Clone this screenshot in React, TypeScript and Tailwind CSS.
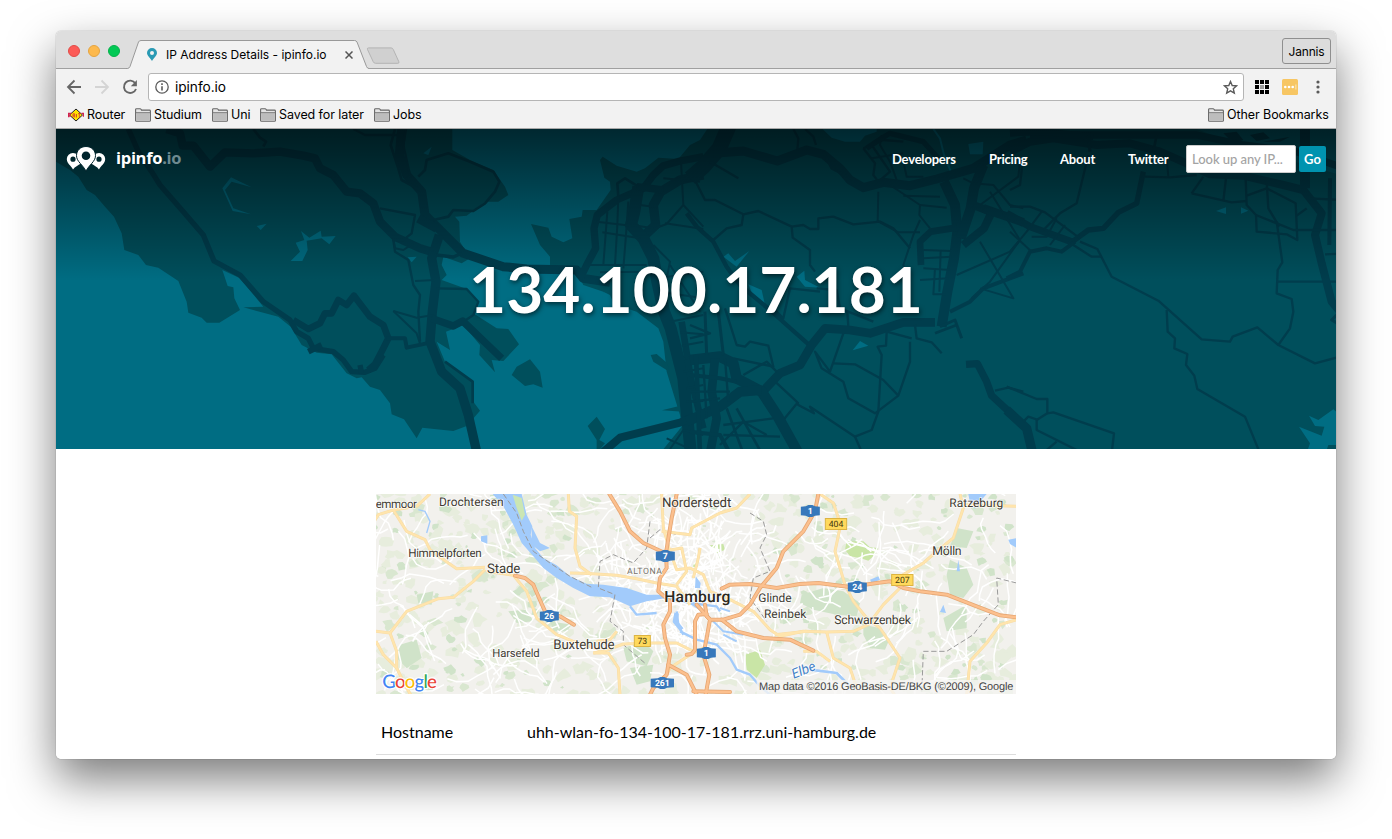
import React from "react";

const LAND = "#004f5c";
const WATER = "#006d83";
const ROAD = "#003d4d";

type Stroke = [string, number];

/* Banner artwork is split in four 960-unit wide sheets laid side by side. */
const sheetA: Stroke[] = [
  ["235,12 265,80 305,140 330,180 400,260 460,330 492,408 570,450 640,530 720,585 740,620 775,640 790,670 850,680 880,705 905,740 945,742 975,730 1000,690", 16],
  ["350,12 390,25 398,62 430,62 480,125 525,82 610,85 690,80 760,92 795,100 810,130 850,150 890,200 930,205 970,235 990,290 1035,335 1110,370 1160,385", 25],
  ["730,585 775,612 810,595 825,565 845,565 865,525 890,540 912,512 960,575 1000,600 1015,640 1000,670 975,718 955,735", 20],
  ["775,680 815,660", 18],
  ["930,720 935,745", 16],
  ["610,12 630,38 648,50 640,65", 8],
  ["910,12 945,30 1050,30", 7],
];
const sheetB: Stroke[] = [
  ["95,12 88,90 110,150 155,200 165,270 215,320 280,385 400,425 470,432 620,435 640,460 720,472", 27],
  ["75,12 62,60 85,130 95,165 150,195", 8],
  ["108,12 100,60 120,150", 7],
  ["208,330 185,400 198,470 187,560 180,650 215,740 270,790 295,870 320,980", 28],
  ["145,155 165,135 170,105 235,85 300,110 370,140 388,170 375,200 345,235 310,258 250,255 235,275 190,285", 8],
  ["145,280 200,310", 26],
  ["30,250 135,270 125,325 100,345 70,345 75,380 115,405 130,480 150,510 145,560 150,650", 7],
  ["70,340 75,370 100,375 130,355", 6],
  ["135,468 195,465", 6],
  ["70,558 140,578 190,570", 6],
  ["70,558 140,625 150,655", 6],
  ["200,490 290,492 325,530 310,570 280,590", 7],
  ["185,580 250,603 278,588 395,700", 22],
  ["50,640 105,640 110,668 170,655", 12],
  ["225,710 308,770 308,835", 8],
  ["200,390 250,396 275,385", 10],
  ["1000,95 930,108 880,122 850,150 820,190 740,225 682,270 672,310 677,370 650,420 630,462", 22],
  ["1000,150 930,165 872,200 850,240 857,300 825,330", 28],
  ["805,185 793,260 783,300 820,340 850,400 862,470 882,560 902,610 940,760 952,880 962,980", 36],
  ["695,985 750,938 930,893 960,880", 24],
  ["935,590 962,760 1000,910", 20],
  ["800,185 880,195", 22],
  ["745,215 742,175 765,160 805,185", 8],
  ["745,215 742,300 735,420", 6],
  ["712,260 700,420", 6],
  ["775,230 768,330 760,430", 6],
  ["680,290 790,303", 6],
  ["697,322 810,340", 6],
  ["640,420 830,420", 6],
  ["690,442 830,440", 6],
  ["810,240 850,245", 6],
  ["785,300 850,310", 6],
  ["880,160 990,170", 6],
  ["933,110 940,240 1000,305", 6],
  ["940,240 890,297 850,312", 6],
  ["885,295 1000,312", 6],
  ["850,360 900,410 890,460", 6],
  ["860,460 1000,440", 6],
  ["870,500 1000,520", 6],
  ["900,420 990,560", 6],
  ["900,590 1000,570", 6],
  ["930,622 1000,628", 6],
  ["935,662 1000,650", 6],
  ["945,700 1000,695", 6],
  ["940,740 1000,730", 6],
  ["950,790 1000,780", 6],
  ["950,830 1000,828", 6],
  ["900,972 940,915 1000,930", 6],
  ["890,940 960,972", 6],
];
const sheetC: Stroke[] = [
  ["118,0 88,70 40,125 0,160", 46],
  ["70,85 160,78 262,108 350,75 400,88 450,130 480,165 520,188 580,172 660,182 740,162 850,130 960,60 1010,45", 27],
  ["400,80 425,130 500,170", 8],
  ["18,172 45,225 75,225 160,268 205,258 305,305 308,338 360,375 360,420 375,440", 7],
  ["160,268 155,300 110,310 70,345", 7],
  ["305,305 340,300 360,312 385,312 385,280 430,275 490,298 570,290 610,310 660,370", 7],
  ["60,110 145,160", 7],
  ["310,12 325,40 322,75", 7],
  ["345,12 370,35 378,60", 7],
  ["-10,265 20,305 70,350 110,425 150,480 240,555 290,600 360,662", 13],
  ["215,803 270,745 330,720 365,660 405,610 480,615 540,625 640,592 735,592", 26],
  ["755,605 772,500 792,400 802,320 795,240 762,170", 30],
  ["880,120 852,190 842,250 812,340", 30],
  ["850,240 905,262 882,310 820,360", 24],
  ["693,420 690,350 722,320 800,308", 20],
  ["880,250 1000,292", 26],
  ["780,560 840,530 880,490 1000,445", 12],
  ["565,200 563,288 625,322 690,322", 6],
  ["600,180 690,240 688,270 720,310", 6],
  ["690,240 770,248", 6],
  ["640,212 750,215", 6],
  ["690,285 670,330 640,420 660,470", 6],
  ["700,375 785,378", 6],
  ["700,400 785,395", 6],
  ["700,430 780,435", 6],
  ["690,465 775,460", 6],
  ["735,430 730,508 768,508", 6],
  ["752,375 748,500", 6],
  ["520,70 555,115 550,150 565,170 600,140 545,60", 7],
  ["520,70 580,45 640,50", 7],
  ["575,30 570,60 600,110 620,165", 6],
  ["545,100 640,85", 6],
  ["530,70 575,40 600,25 700,50 745,100", 16],
  ["640,110 650,155 700,155", 6],
  ["990,345 900,470 845,520", 6],
  ["870,350 970,520 870,490", 6],
  ["900,200 990,345 960,380 800,450", 6],
  ["820,160 850,175 910,180 960,240 1000,250", 6],
  ["870,240 985,155 990,110", 6],
  ["750,605 795,585 815,640", 9],
  ["735,625 800,600", 8],
  ["675,600 680,640 725,652 755,685", 7],
  ["665,640 590,620 588,662 563,665 575,690 565,860 545,915 495,935 360,845 372,865 325,840 320,830 245,760", 7],
  ["460,625 420,740 375,680 395,730 460,770 475,820 555,865 625,812 660,710 660,650", 7],
  ["430,715 495,718 580,765 625,812", 7],
  ["495,935 515,980", 7],
  ["325,830 280,885", 7],
  ["472,560 475,605", 7],
  ["380,490 440,495 450,550 550,590", 7],
  ["240,540 280,580 300,490 390,500", 7],
  ["105,550 140,660 165,665 180,650 235,662 250,725 130,700", 7],
  ["160,750 230,710 260,740", 7],
  ["0,705 90,695 130,715 140,760 215,800 262,872 325,985", 32],
  ["-10,890 90,845 150,800 215,795", 30],
  ["75,700 65,800 80,880 60,985", 26],
  ["0,750 90,760 140,770", 12],
  ["18,690 30,985", 14],
  ["45,560 50,690", 9],
  ["85,560 100,690", 9],
  ["0,600 60,625 0,640", 7],
  ["0,800 120,800", 7],
  ["0,830 90,820", 7],
  ["110,850 160,985", 8],
  ["140,850 215,985", 8],
  ["100,900 250,880", 7],
  ["100,930 270,935", 7],
  ["90,960 160,890 230,930", 7],
  ["0,920 90,930 120,985", 12],
  ["40,720 50,880", 7],
  ["105,700 115,830", 7],
  ["828,718 862,716 890,770 905,812 1000,900", 22],
  ["915,797 955,788 1000,800", 7],
];
const sheetD: Stroke[] = [
  ["-10,265 60,305 190,352", 22],
  ["180,355 235,315 280,310 325,262 380,235 400,140", 16],
  ["-10,460 30,440 60,380 110,370 155,380 195,350", 12],
  ["0,245 60,245 105,262 210,340", 7],
  ["0,380 50,320 95,260", 6],
  ["65,335 110,335 140,280", 6],
  ["100,315 150,265 200,235 235,90", 7],
  ["0,320 65,380", 6],
  ["120,360 165,300", 6],
  ["0,195 30,180 38,110", 7],
  ["210,350 262,372 305,455 445,527 575,643 660,650 668,635 742,607 805,660 915,715 990,695", 7],
  ["190,360 245,395 275,395", 7],
  ["470,555 473,620 495,640 493,670 532,687 528,720 553,752 562,792 705,875 750,985", 7],
  ["800,290 817,412 803,435 800,505 845,522 850,560 840,610 805,660", 7],
  ["800,470 990,470", 7],
  ["0,80 60,50 130,40 260,60 360,55 450,80 530,115 600,148 700,152 820,180 880,195 935,265 915,330 935,415 965,530 990,560", 24],
  ["60,30 450,30 560,30 700,60 860,80 990,125", 22],
  ["885,0 885,190", 30],
  ["0,25 100,20 250,35", 20],
  ["235,30 240,80", 10],
  ["440,30 430,80", 8],
  ["545,205 580,155", 7],
  ["545,205 665,232 710,228", 7],
  ["648,160 640,228", 7],
  ["707,160 710,240 738,270 740,320 830,328 862,345 857,235 770,190 710,212", 7],
  ["770,170 775,250 808,305", 7],
  ["738,270 850,315 990,315", 7],
  ["860,272 890,250", 7],
  ["960,160 958,360", 12],
  ["900,220 990,225", 7],
  ["945,388 990,386", 7],
  ["405,155 480,157 560,150", 7],
  ["470,100 475,155", 6],
  ["990,560 965,585 990,600", 9],
  ["-10,855 50,910 68,985", 28],
  ["-10,785 80,822 112,822 112,865 80,885 80,915 200,975", 7],
  ["112,865 130,862 312,925 305,985", 7],
  ["40,890 55,875 85,885", 7],
  ["110,975 140,950", 7],
];

function Roads({ list, x }: { list: Stroke[]; x: number }) {
  return (
    <g transform={`translate(${x} 0)`} fill="none" stroke={ROAD} strokeLinejoin="round">
      {list.map(([p, w], i) => (
        <polyline key={i} points={p} strokeWidth={w} />
      ))}
    </g>
  );
}

function BannerMap() {
  return (
    <svg className="absolute inset-0 size-full" viewBox="18 12 3840 960" preserveAspectRatio="none">
      <defs>
        <linearGradient id="shade" x1="0" y1="0" x2="0" y2="1">
          <stop offset="0" stopColor="#000" stopOpacity=".64" />
          <stop offset="1" stopColor="#000" stopOpacity="0" />
        </linearGradient>
      </defs>
      <rect x="0" y="0" width="3900" height="1000" fill={WATER} />
      <g fill={LAND}>
        <path d="M0 100L60 135 85 155 110 195 135 210 165 245 192 275 215 325 223 375 265 390 288 420 325 428 385 468 410 530 415 563 455 578 470 593 508 593 570 555 553 520 550 487 533 483 517 435 570 460 640 545 580 547 685 575 722 605 755 660 800 683 845 688 890 745 920 760 935 757 960 785 990 795 1020 835 1025 868 1062 883 1100 940 1117 908 1210 918 1250 903 1290 857 1270 830 1270 770 1185 710 1160 650 1200 675 1188 620 1240 600 1290 660 1288 690 1335 742 1325 705 1360 708 1407 658 1375 612 1340 610 1270 565 1285 530 1250 492 1175 465 1190 450 1175 420 1180 395 1235 415 1260 400 1230 350 1228 290 1215 275 1250 272 1305 230 1345 230 1375 210 1365 185 1330 135 1260 105 1207 75V0H0z" />
        <path d="M1980 0L1950 45 1920 60 1885 102 1825 98 1785 130 1760 140 1700 122 1658 95 1650 105 1663 158 1680 170 1682 195 1640 255 1598 255 1595 275 1558 282 1567 340 1540 352 1505 335 1495 308 1443 297 1470 360 1500 395 1500 425 1580 440 1600 480 1660 500 1670 530 1700 540 1760 560 1825 610 1840 650 1850 740 1890 870 1895 905 1830 985H3900V0z" />
        <path d="M1440 703L1470 740 1478 788 1450 778 1425 783 1385 750 1400 725z" />
        <path d="M1640 875L1665 912 1648 945 1665 955 1640 985V945L1613 903z" />
        <path d="M1802 690L1820 687 1852 715 1858 740 1810 710z" />
        <path d="M1836 856L1900 840V860z" />
      </g>
      <g fill={WATER}>
        <path d="M543 157L605 187 545 170 525 195 550 250 603 268 548 258 517 190z" />
        <path d="M620 303L650 296 632 315z" />
        <path d="M753 318L778 338 812 317 815 335 857 333 838 358 815 340 770 347 773 375 757 408H722L750 380 737 353 763 345z" />
        <path d="M1120 85L1145 65 1135 90z" />
        <path d="M1073 397L1100 395 1085 412z" />
        <path d="M1580 480L1590 490 1585 510zM1660 500L1680 510 1690 535 1670 550 1655 530z" />
        <path d="M2020 395L2035 385 2055 408 2098 378 2060 425z" />
        <path d="M2095 478L2135 495 2145 540 2110 515z" />
        <path d="M2240 455L2263 437 2265 465 2310 488 2265 485z" />
        <path d="M2408 676L2430 648 2455 662z" />
        <path d="M2755 57L2800 50 2798 88 2760 88z" />
        <path d="M2305 0L2345 38 2385 50 2430 50 2445 32 2480 20 2480 0z" />
        <path d="M3498 258L3528 247V267zM3573 247L3595 257 3573 266z" />
        <path d="M3747 905L3815 932 3823 905 3795 903 3777 872 3805 885 3850 853 3870 870V960H3835L3830 975H3773L3780 955z" />
        <path d="M3440 12H3870V150L3700 100 3560 60z" opacity=".4" />
      </g>
      <path d="M2650 12L2670 40 2682 90 2705 145" fill="none" stroke={WATER} strokeWidth="6" />
      <g fill={ROAD}>
        <path d="M3520 25L3560 20 3580 45 3550 55zM3600 30L3640 22 3660 40 3620 48zM3640 50L3720 35 3690 50z" />
      </g>
      <Roads list={sheetA} x={0} />
      <Roads list={sheetB} x={960} />
      <Roads list={sheetC} x={1920} />
      <Roads list={sheetD} x={2880} />
      <rect x="0" y="12" width="3900" height="456" fill="url(#shade)" />
    </svg>
  );
}

/* Deterministic countryside texture for the city map. */
function makeRandom(seed: number) {
  let s = seed;
  return () => {
    s = (s * 16807) % 2147483647;
    return s / 2147483647;
  };
}

function blob(r: () => number, x: number, y: number, size: number) {
  const pts: string[] = [];
  const n = 7 + Math.floor(r() * 4);
  for (let i = 0; i < n; i++) {
    const a = (i / n) * Math.PI * 2;
    const d = size * (0.45 + r() * 0.7);
    pts.push(`${(x + Math.cos(a) * d).toFixed(0)},${(y + Math.sin(a) * d * 0.8).toFixed(0)}`);
  }
  return pts.join(" ");
}

function wander(r: () => number, x: number, y: number, steps: number, len: number) {
  let a = r() * Math.PI * 2;
  let d = `M${x.toFixed(0)} ${y.toFixed(0)}`;
  for (let i = 0; i < steps; i++) {
    a += (r() - 0.5) * 1.1;
    x += Math.cos(a) * len * (0.6 + r());
    y += Math.sin(a) * len * (0.6 + r());
    d += `L${x.toFixed(0)} ${y.toFixed(0)}`;
  }
  return d;
}

const rnd = makeRandom(4127);
const fields = Array.from({ length: 720 }, () => {
  const x = rnd() * 1940;
  const y = rnd() * 630;
  const city = Math.hypot((x - 960) / 1.3, y - 270) < 220;
  return { p: blob(rnd, x, y, city ? 6 : 9 + rnd() * 19), c: rnd() < 0.82 ? "#e7eddd" : "#d9e7d0" };
});
const woods = Array.from({ length: 120 }, () => {
  const x = rnd() < 0.35 ? rnd() * 600 : 1200 + rnd() * 740;
  return blob(rnd, x, rnd() * 630, 6 + rnd() * 14);
});
const lanes = Array.from({ length: 230 }, () => wander(rnd, rnd() * 1940, rnd() * 630, 6, 24));
const cityLanes = Array.from({ length: 170 }, () =>
  wander(rnd, 960 + (rnd() + rnd() - 1) * 250, 270 + (rnd() + rnd() - 1) * 270, 5, 18),
);

const yellowRoads = [
  "0,120 25,80 70,66 140,55 180,18",
  "70,66 110,130 165,155 180,185 235,225 260,242 345,238",
  "345,245 310,280 250,328 205,332 110,370 60,435 18,430",
  "60,435 80,490 80,540 110,600 125,625",
  "18,460 40,500 80,540",
  "350,250 430,262 470,310 500,390 560,440 610,460 690,485",
  "595,18 598,70 620,85 615,180 630,235 665,260",
  "600,255 640,256 740,262 800,272 860,285 920,295 960,350",
  "670,495 700,490 760,468 850,465 920,465 970,490",
  "670,495 715,495 745,540 750,620",
  "740,430 720,455 680,460",
  "875,18 880,120 900,190 920,245 960,240 1000,260 1020,310 1080,335 1150,370 1200,425 1230,445 1300,430 1370,432 1450,430 1495,410 1540,350 1590,300",
  "880,190 935,180 950,250 920,290",
  "875,130 960,140 965,120 1050,75 1100,60 1140,18",
  "1350,18 1390,45 1412,110 1395,190 1425,290 1450,340 1490,390 1530,420 1590,510 1560,600 1580,630",
  "1590,300 1600,260 1660,225 1700,190 1750,150 1780,60 1770,18",
  "1780,50 1940,55",
  "1370,432 1390,510 1440,540 1460,600",
  "1215,440 1310,430",
  "1940,395 1890,410 1850,465 1800,520 1790,620",
  "880,580 900,540 960,500 1000,480",
  "970,270 985,210 990,180",
  "1300,490 1340,490 1380,520",
];
const motorways = [
  "718,18 750,70 780,130 820,165 885,195",
  "920,18 905,90 888,195 890,240 870,270 865,310 900,340 900,370 880,410 885,450 900,500 890,560 850,600 835,630",
  "895,530 950,560 980,620",
  "1055,302 1080,290 1140,288 1220,300 1290,288 1345,285 1440,297 1520,285 1560,280 1600,300 1650,310 1730,320 1820,355 1890,382 1940,388",
  "1345,18 1335,70 1300,130 1240,190 1220,240 1170,300 1140,350 1110,380 1060,395 1020,395 980,350",
  "1055,395 1100,430 1180,450 1260,455 1330,488",
  "1005,350 1010,385 1020,395 1010,450 1000,500 1018,560 1005,630",
  "1010,378 985,380 975,400 975,485 965,498 950,500",
  "970,610 1080,612",
  "435,263 465,270 490,290 505,325 525,370 570,385 612,410",
];

function Shield({ x, y, w, t, blue }: { x: number; y: number; w: number; t: string; blue?: boolean }) {
  const h = 33;
  return (
    <g transform={`translate(${x} ${y})`}>
      {blue ? (
        <path d={`M${-w / 2} -13L-14 -14 -6 -18H6L14 -14 ${w / 2} -13V13L14 14 6 18H-6L-14 14 ${-w / 2} 13z`} fill="#3778bb" />
      ) : (
        <rect x={-w / 2} y={-h / 2} width={w} height={h} fill="#ffd95c" stroke="#dcb442" strokeWidth="3" />
      )}
      <text y="9" textAnchor="middle" fontSize="26" fontWeight={blue ? 700 : 400} fill={blue ? "#fff" : "#40370f"}>
        {t}
      </text>
    </g>
  );
}

const places: [string, number, number, number, number][] = [
  ["emmoor", 17, 60, 35, 124],
  ["Drochtersen", 207, 54, 36, 194],
  ["Himmelpforten", 115, 207, 35, 220],
  ["Stade", 351, 255, 40, 100],
  ["Buxtehude", 550, 483, 40, 184],
  ["Harsefeld", 367, 507, 34, 142],
  ["Norderstedt", 876, 57, 40, 208],
  ["Glinde", 1165, 342, 36, 100],
  ["Reinbek", 1182, 390, 36, 127],
  ["Schwarzenbek", 1393, 408, 37, 230],
  ["Mölln", 1687, 201, 37, 88],
  ["Ratzeburg", 1738, 57, 36, 162],
];

function CityMap() {
  return (
    <svg className="block h-[200px] w-[640px]" viewBox="18 18 1920 600" fontFamily="Roboto, sans-serif" textRendering="geometricPrecision">
      <rect x="0" y="0" width="1960" height="640" fill="#f2f1ed" />
      {fields.map((f, i) => (
        <polygon key={i} points={f.p} fill={f.c} />
      ))}
      <g fill="#d0e3c9">
        {woods.map((p, i) => (
          <polygon key={i} points={p} />
        ))}
        <path d="M1295 320L1360 300 1420 310 1470 345 1460 385 1400 380 1330 365 1290 345zM1480 410L1530 420 1560 450 1545 485 1500 480 1480 440z" />
        <path d="M1740 215L1790 240 1810 290 1780 330 1740 320 1730 260zM1720 390L1790 350 1790 420 1730 430zM1760 120L1810 130 1790 180 1740 175z" />
        <path d="M415 370L470 365 490 400 440 405zM540 400L605 410 590 430 550 430zM90 470L140 455 155 510 110 540 80 510zM140 320L190 310 185 350 145 345z" />
        <path d="M760 480L820 460 850 490 830 535 770 520zM780 540L850 530 840 580 800 590z" />
      </g>
      <g fill="#c9e5a6">
        <path d="M1430 160L1480 160 1500 178 1525 180 1515 200 1495 218 1470 210 1440 205 1425 185z" />
        <path d="M1125 500L1170 485 1185 530 1160 570 1130 545zM1020 172L1060 168 1065 185 1035 198zM970 225h14v15h-14z" />
      </g>
      <g fill="none" stroke="#fff" strokeWidth="4.500" strokeLinejoin="round">
        {lanes.map((d, i) => (
          <path key={i} d={d} />
        ))}
      </g>
      <g fill="none" stroke="#fff" strokeWidth="5">
        {cityLanes.map((d, i) => (
          <path key={i} d={d} />
        ))}
      </g>
      <g fill="#a2cbfb">
        <path d="M368 18L400 55 430 110 455 165 490 205 520 240 560 270 610 300 660 325 720 328 780 355 830 340 890 330 900 320 830 320 770 300 700 290 650 287 600 265 560 232 520 210 495 180 482 140 487 115 470 80 455 18z" />
        <path d="M485 115L510 165 540 180 510 190 485 170zM333 145L352 142 352 167 333 160zM977 265L992 285 990 300 975 300z" />
        <path d="M1500 275L1525 265 1530 275 1505 285zM1765 215L1770 250 1760 250zM1720 350L1728 375 1710 372z" />
        <path d="M1795 18L1850 18 1835 35 1815 62 1800 45zM1915 155L1940 150V180L1920 168z" />
      </g>
      <path d="M428 20L455 30 465 80 455 98 440 60z" fill="#cbe6b3" />
      <g fill="none" stroke="#a2cbfb" strokeWidth="8" strokeLinejoin="round">
        <path d="M780 355L800 380 860 375M920 370L925 410 940 440M900 330L960 345 1040 355 1050 370M930 430L980 455 1040 470 1080 510 1100 545 1140 560 1170 595 1200 620" strokeWidth="7" />
        <path d="M920 375L915 400 935 425" strokeWidth="14" />
        <path d="M960 345L1000 370 1060 430 1120 440M1050 360L1080 370M1060 440L1100 460" strokeWidth="6" />
        <path d="M1320 545L1400 555 1440 595" />
        <path d="M145 65L165 70 180 100 170 135" strokeWidth="4" />
      </g>
      <g fill="none" stroke="#9a9a9a" strokeWidth="3" strokeDasharray="16 8">
        <path d="M400 18L440 75 460 130 490 190 540 225 600 265 665 298" />
        <path d="M840 100L830 180 790 225 730 200 690 220 685 300 735 320 720 400 760 430 760 470 830 530" />
        <path d="M840 150L870 125 920 140M1140 75L1180 100 1190 140 1170 180 1200 250 1150 270 1140 330 1190 400" />
        <path d="M1940 285L1880 270 1885 350 1840 400 1810 440 1730 490 1660 490 1655 620" />
      </g>
      <g fill="none" strokeLinejoin="round">
        {yellowRoads.map((p, i) => (
          <polyline key={i} points={p} stroke="#f8dca6" strokeWidth="9" />
        ))}
        {yellowRoads.map((p, i) => (
          <polyline key={i} points={p} stroke="#ffe5ad" strokeWidth="6" />
        ))}
        {motorways.map((p, i) => (
          <polyline key={i} points={p} stroke="#e6a774" strokeWidth="12" strokeLinecap="round" />
        ))}
        {motorways.map((p, i) => (
          <polyline key={i} points={p} stroke="#fcc08e" strokeWidth="7" strokeLinecap="round" />
        ))}
      </g>
      <Shield x={538} y={384} w={57} t="26" blue />
      <Shield x={886} y={204} w={57} t="7" blue />
      <Shield x={1009} y={495} w={57} t="1" blue />
      <Shield x={877} y={585} w={70} t="261" blue />
      <Shield x={1321} y={69} w={57} t="1" blue />
      <Shield x={1462} y={297} w={57} t="24" blue />
      <Shield x={817} y={459} w={48} t="73" />
      <Shield x={1398} y={108} w={64} t="404" />
      <Shield x={1597} y={276} w={64} t="207" />
      <g fill="#3f3b33" stroke="#fff" strokeWidth="5" strokeOpacity=".8" paintOrder="stroke" strokeLinejoin="round">
        {places.map(([t, x, y, s, w]) => (
          <text key={t} x={x} y={y} fontSize={s} textLength={w}>
            {t}
          </text>
        ))}
        <text x="883" y="343" fontSize="47" fontWeight="500" textLength="198" fill="#2c2820">
          Hamburg
        </text>
        <text x="771" y="257" fontSize="26" textLength="105" fill="#77736a">
          ALTONA
        </text>
        <text transform="translate(1271 572) rotate(-22)" fontSize="40" fontStyle="italic" fill="#3f7fc6">
          Elbe
        </text>
      </g>
      <rect x="1160" y="576" width="790" height="50" fill="#f6f5f3" opacity=".78" />
      <text x="1167" y="605" fontSize="33" textLength="763" fill="#444" fontFamily="'Liberation Sans', sans-serif">
        Map data ©2016 GeoBasis-DE/BKG (©2009), Google
      </text>
      <text x="37" y="599" fontSize="56" fontWeight="500" textLength="164" fontFamily="Lato, sans-serif" stroke="#fff" strokeWidth="7" paintOrder="stroke">
        <tspan fill="#4285f4">G</tspan>
        <tspan fill="#ea4335">o</tspan>
        <tspan fill="#fbbc05">o</tspan>
        <tspan fill="#4285f4">g</tspan>
        <tspan fill="#34a853">l</tspan>
        <tspan fill="#ea4335">e</tspan>
      </text>
    </svg>
  );
}

function Folder() {
  return (
    <svg className="h-[14px] w-4 shrink-0" viewBox="0 0 16 14">
      <path d="M.6 12.4V1.6q0-.9.9-.9h3.6q.6 0 .9.5l.5.9h8q.9 0 .9.9v9.4q0 .9-.9.9h-13q-.9 0-.9-.9z" fill="#e4e4e4" stroke="#666" strokeWidth="1.1" />
      <path d="M1.2 5.2h13.6v7.4H1.2z" fill="#bdbdbd" />
      <path d="M.8 4.7h14.4" stroke="#777" />
    </svg>
  );
}

function Bookmark({ label, w }: { label: string; w: string }) {
  return (
    <div className={"flex items-center gap-[3px] " + w}>
      <Folder />
      <span>{label}</span>
    </div>
  );
}

function Pin({ className, fill }: { className: string; fill: string }) {
  return (
    <svg className={className} viewBox="0 0 10 13">
      <path fillRule="evenodd" fill={fill} d="M5 0a5 5 0 0 1 5 5c0 3-3.600 5-5 8C3.600 10 0 8 0 5a5 5 0 0 1 5-5zM5 3a2 2 0 1 0 0 4 2 2 0 0 0 0-4z" />
    </svg>
  );
}

function TabStrip() {
  return (
    <div className="relative flex h-[38px] items-start border-b border-[#a0a0a0] bg-[#dedede]">
      <div className="flex gap-2 pl-3 pt-[14px]">
        <span className="size-3 rounded-full border border-[#e24b47] bg-[#fc5b57]" />
        <span className="size-3 rounded-full border border-[#e5a440] bg-[#fdb94d]" />
        <span className="size-3 rounded-full border border-[#05b14b] bg-[#02c955]" />
      </div>
      <div className="relative ml-2 mt-[9px] -mb-px flex h-[29px] w-[243px] items-center">
        <svg className="absolute inset-y-0 left-[-2px] h-full w-[243px]" viewBox="0 0 243 29">
          <path d="M0 28.500H1.500Q3 28.500 4 26.500L12.500 2Q13.200.500 15 .500H228.500Q230.200.500 231 2L240.500 26.500Q241.300 28.500 243 28.500V29H0z" fill="#f2f2f2" />
          <path d="M0 28.500H1.500Q3 28.500 4 26.500L12.500 2Q13.200.500 15 .500H228.500Q230.200.500 231 2L240.500 26.500Q241.300 28.500 243 28.500" fill="none" stroke="#999" />
        </svg>
        <Pin className="relative ml-[19px] h-[13px] w-[10px]" fill="#2a9ab4" />
        <span className="relative ml-[9px] w-[171px] whitespace-nowrap text-[12px]">IP Address Details - ipinfo.io</span>
        <svg className="relative ml-2 size-2" viewBox="0 0 8 8">
          <path d="M.5.5l7 7M7.500.500l-7 7" stroke="#555" strokeWidth="1.500" />
        </svg>
      </div>
      <svg className="-ml-[5px] mt-[16px] h-[18px] w-[34px]" viewBox="0 0 34 18">
        <path d="M2.500.900H25q1.600 0 2.300 1.600l5.500 12.200q.700 1.600-1 1.600H9.500q-1.600 0-2.300-1.600L1.500 2.500Q.900.900 2.500.900z" fill="#d0d0d0" stroke="#b3b3b3" />
      </svg>
      <div className="ml-auto mr-[5px] mt-[7px] flex h-[26px] w-[49px] items-center justify-center rounded-[3px] border border-[#8f8f8f] bg-[#dcdcdc] pt-px text-[12px] tracking-[-0.150px]">
        Jannis
      </div>
    </div>
  );
}

function Toolbar() {
  return (
    <div className="flex h-9 items-center bg-[#f2f2f2]">
      <svg className="ml-[10px] size-4" viewBox="0 0 16 16" fill="none" stroke="#666" strokeWidth="1.800">
        <path d="M15 8H2.500M8.500 1.500L2 8l6.500 6.500" />
      </svg>
      <svg className="ml-3 size-4" viewBox="0 0 16 16" fill="none" stroke="#d4d4d4" strokeWidth="1.800">
        <path d="M1 8h12.500M7.500 1.500L14 8l-6.500 6.500" />
      </svg>
      <svg className="ml-3 size-4" viewBox="0 0 16 16" fill="none" stroke="#666" strokeWidth="1.900">
        <path d="M13.300 4.300A6.200 6.200 0 1 0 14 10" />
        <path d="M14.900 1v6.200H8.800z" fill="#666" stroke="none" />
      </svg>
      <div className="ml-[10px] flex h-7 w-[1096px] items-center rounded-[3px] border border-[#b5b5b5] bg-white pl-[6px] pr-[5px]">
        <svg className="size-[14px]" viewBox="0 0 14 14" fill="none" stroke="#5a5a5a" strokeWidth="1.300">
          <circle cx="7" cy="7" r="6.200" />
          <path d="M7 6.200v4.300M7 3.300V5" strokeWidth="1.600" />
        </svg>
        <span className="ml-[6px] text-[13.700px] tracking-[-0.050px]">ipinfo.io</span>
        <svg className="ml-auto size-[15px]" viewBox="0 0 15 15" fill="none" stroke="#5a5a5a" strokeWidth="1.400">
          <path d="M7.500 1.500l1.700 4 4.400.400-3.300 2.900 1 4.300-3.800-2.300-3.800 2.300 1-4.300L1.400 5.900l4.400-.400z" />
        </svg>
      </div>
      <svg className="ml-[11px] size-[14px]" viewBox="0 0 14 14">
        <path d="M0 0h4v4H0zM5 0h4v4H5zM10 0h4v4h-4zM0 5h4v4H0zM10 5h4v4h-4zM0 10h4v4H0zM5 10h4v4H5zM10 10h4v4h-4z" />
        <path d="M5 5h4v4H5z" fill="#999" />
      </svg>
      <svg className="ml-[13px] size-4" viewBox="0 0 16 16">
        <rect width="16" height="16" rx="1.500" fill="#f7c663" />
        <g fill="#fff">
          <circle cx="3.300" cy="8" r="1.300" />
          <circle cx="7" cy="8" r="1.300" />
          <circle cx="10.700" cy="8" r="1.300" />
          <path d="M13.500 5.500h.8v5h-.8z" opacity=".7" />
        </g>
      </svg>
      <svg className="ml-[18px] h-[14px] w-1" viewBox="0 0 4 14" fill="#5a5a5a">
        <circle cx="2" cy="2" r="1.600" />
        <circle cx="2" cy="7" r="1.600" />
        <circle cx="2" cy="12" r="1.600" />
      </svg>
    </div>
  );
}

function BookmarksBar() {
  return (
    <div className="flex h-6 items-start border-b border-[#a8a8a8] bg-[#f2f2f2] text-[12.500px] leading-[20px] tracking-[-0.080px]">
      <div className="ml-3 flex w-[67px] items-center gap-[3px]">
        <svg className="h-[14px] w-4" viewBox="0 0 16 14">
          <path d="M8 1l6.500 6L8 13 1.500 7z" fill="#ffe600" stroke="#222" />
          <path d="M0 4.700h3.500v1.300H1.500v1.300h1.500v1.200H1.500V9.300H0zM13.500 4.700H16v4h-1.200V6h-1.300z" fill="#d3214f" />
          <path d="M5 9.500V5.800h1.700v3.700M5 7.800h1.700M8.500 6v3.500M10 5.600h2.600M11.300 5.600v3.900" stroke="#d8402a" fill="none" strokeWidth=".9" />
        </svg>
        <span>Router</span>
      </div>
      <Bookmark label="Studium" w="w-[77px]" />
      <Bookmark label="Uni" w="w-[48px]" />
      <Bookmark label="Saved for later" w="w-[114px]" />
      <Bookmark label="Jobs" w="w-[60px]" />
      <Bookmark label="Other Bookmarks" w="ml-auto mr-2 w-[120px] whitespace-nowrap" />
    </div>
  );
}

function Banner() {
  return (
    <div className="relative h-[320px] overflow-hidden font-[Lato,sans-serif] text-white">
      <BannerMap />
      <div className="relative flex h-[60px] items-center">
        <svg className="ml-[10px] h-[26px] w-10" viewBox="0 0 40 26">
          <g fill="#fff" fillRule="evenodd">
            <path d="M7 7a6 6 0 0 1 4.500 2v4l3.500 4.500C12 19.500 9 20.500 7 23.500 5 19.500.800 17.500.800 13A6 6 0 0 1 7 7zm0 3.600a2.600 2.600 0 1 0 0 5.200 2.600 2.600 0 0 0 0-5.200z" />
            <path d="M33 7a6 6 0 0 0-4.500 2v4L25 17.500c3 2 6 3 8 6 2-4 6.200-6 6.200-10.500A6 6 0 0 0 33 7zm0 3.600a2.600 2.600 0 1 1 0 5.200 2.600 2.600 0 0 1 0-5.200z" />
          </g>
          <path d="M20 .500c5.500 0 9.500 4 9.500 9.200 0 6-6.500 9-9.500 15.500C17 18.700 10.500 15.700 10.500 9.700 10.500 4.500 14.500.500 20 .500z" fill="#fff" stroke="#00252d" strokeWidth="1" />
          <circle cx="20" cy="9.700" r="4.300" fill="#00242c" />
        </svg>
        <div className="ml-[10px] pb-px font-['Open_Sans',sans-serif] text-[16.500px] font-bold tracking-[-0.300px]">
          ipinfo<span className="text-[#6e8a90]">.io</span>
        </div>
        <div className="ml-auto flex items-center text-[13px] font-bold">
          <span className="w-[97px] pt-0.5 tracking-[-0.200px]">Developers</span>
          <span className="w-[71px] pt-0.5 tracking-[-0.200px]">Pricing</span>
          <span className="w-[68px] pt-0.5 tracking-[-0.200px]">About</span>
          <span className="w-[58px] pt-0.5 tracking-[-0.200px]">Twitter</span>
          <div className="flex h-7 w-[110px] items-center rounded-[2px] border border-[#ccc] bg-white pl-[5px] pt-px text-[13px] font-medium tracking-[-0.050px] whitespace-nowrap text-[#a3a3a3]">
            Look up any IP...
          </div>
          <div className="ml-[3px] mr-[10px] flex h-[26px] w-[27px] items-center justify-center rounded-[2px] bg-[#0093af] pt-0.5">Go</div>
        </div>
      </div>
      <h1 className="relative mt-[61px] text-center text-[64px] leading-[77px] font-bold [text-shadow:1px_2px_5px_rgba(0,0,0,.6)]">
        134.100.17.181
      </h1>
    </div>
  );
}

export default function App() {
  return (
    <div className="h-[839px] w-[1392px] overflow-hidden bg-white pl-[56px] pt-[31px] font-[Inter,sans-serif] text-black">
      <div className="h-[728px] w-[1280px] rounded-[5px] shadow-[0_0_1px_rgba(0,0,0,.6),0_20px_46px_rgba(0,0,0,.52)]">
        <div className="flex h-full flex-col overflow-hidden rounded-[5px] bg-white">
          <TabStrip />
          <Toolbar />
          <BookmarksBar />
          <Banner />
          <div className="mx-auto mt-[45px] w-[640px] font-[Lato,sans-serif]">
            <CityMap />
            <div className="mt-4 flex h-[45px] items-center border-b border-[#ddd] pl-[5px] text-[16px]">
              <span className="w-[146px]">Hostname</span>
              <span>uhh-wlan-fo-134-100-17-181.rrz.uni-hamburg.de</span>
            </div>
          </div>
        </div>
      </div>
    </div>
  );
}
